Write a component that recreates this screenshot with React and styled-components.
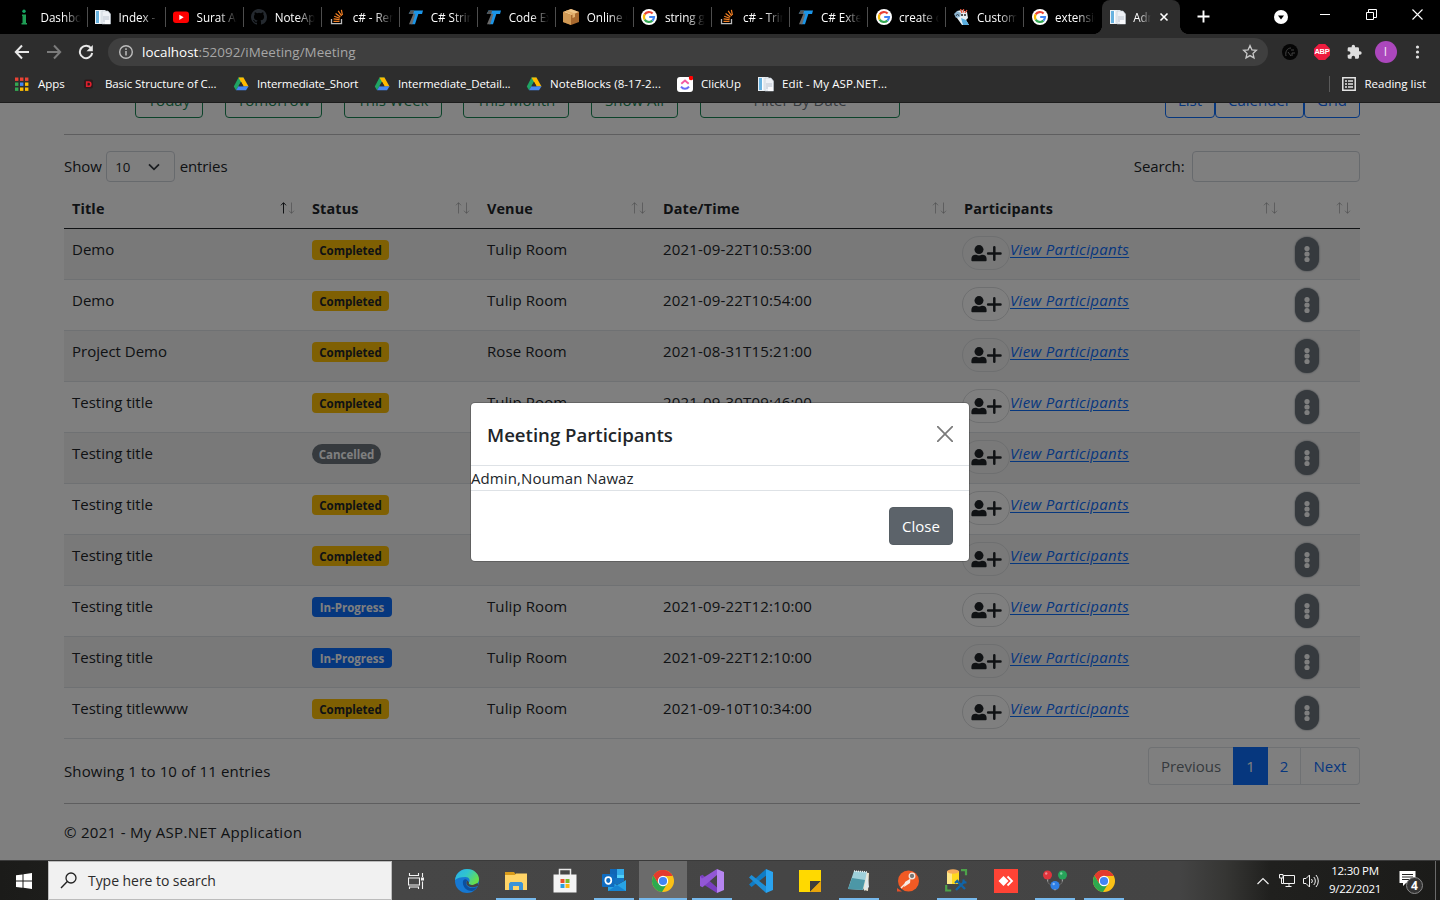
import React from "react";
import styled, { createGlobalStyle, css } from "styled-components";

const Global = createGlobalStyle`
  *, *::before, *::after { box-sizing: border-box; }
  body { margin: 0; background: #000; overflow: hidden; }
  svg { display: block; flex: none; }
  button, input { font: inherit; letter-spacing: inherit; }
`;

const Screen = styled.div`
  width: 1440px;
  height: 900px;
  display: flex;
  flex-direction: column;
  overflow: hidden;
  font-family: "Open Sans", "Noto Sans", sans-serif;
`;

/* ---------- Browser chrome ---------- */
const TabStrip = styled.header`
  height: 34px;
  flex: none;
  display: flex;
  padding-left: 9.5px;
  background: #000;
  color: #fff;
`;
const Tab = styled.div`
  width: 78.05px;
  flex: none;
  height: 34px;
  display: flex;
  align-items: center;
  padding-left: 7.5px;
  gap: 8px;
  position: relative;
  border-radius: 8px 8px 0 0;
  background: ${(p) => (p.$active ? "#2d2d2d" : "transparent")};
  ${(p) =>
    p.$divider &&
    css`
      &::after {
        content: "";
        position: absolute;
        right: 0;
        top: 7px;
        width: 1px;
        height: 20px;
        background: #4d4d4d;
      }
    `}
  ${(p) =>
    p.$active &&
    css`
      &::before, &::after {
        content: "";
        position: absolute;
        bottom: 0;
        width: 8px;
        height: 8px;
      }
      &::before { left: -8px; background: radial-gradient(circle at 0 0, transparent 7.6px, #2d2d2d 8px); }
      &::after { right: -8px; background: radial-gradient(circle at 100% 0, transparent 7.6px, #2d2d2d 8px); }
    `}
`;
const TabTitle = styled.span`
  width: ${(p) => (p.$active ? 18 : 40)}px;
  margin-left: -0.5px;
  overflow: hidden;
  white-space: nowrap;
  font-size: 11.7px;
  line-height: 18px;
  letter-spacing: -0.05px;
  mask-image: linear-gradient(to right, #000 ${(p) => (p.$active ? 30 : 55)}%, transparent 100%);
`;
const StripTools = styled.div`
  flex: 1;
  display: flex;
  align-items: flex-start;
  padding-left: 15px;
`;
const ToolGlyph = styled.div`
  margin: ${(p) => p.$m};
`;

const AddressRow = styled.div`
  height: 35px;
  flex: none;
  display: flex;
  align-items: center;
  background: #2d2d2d;
  padding: 1px 14px 0 14px;
`;
const NavGroup = styled.div`
  display: flex;
  gap: 16px;
  width: 94px;
`;
const Omnibox = styled.div`
  width: 1160px;
  height: 28px;
  border-radius: 14px;
  background: #3f3f3f;
  display: flex;
  align-items: center;
  padding: 0 10px;
  color: #a6a6a6;
  font-size: 13.4px;
  letter-spacing: 0.03px;
  white-space: nowrap;
  b { color: #fff; font-weight: 400; }
`;
const Url = styled.span`
  flex: 1;
  margin-left: 8px;
`;
const Extensions = styled.div`
  display: flex;
  align-items: center;
  margin-left: 14px;
`;
const Abp = styled.div`
  width: 16px;
  height: 16px;
  margin: 0 16px;
  background: #ee1c3f;
  clip-path: polygon(30% 0, 70% 0, 100% 30%, 100% 70%, 70% 100%, 30% 100%, 0 70%, 0 30%);
  display: grid;
  place-items: center;
  color: #fff;
  font: 700 7.5px/16px "Liberation Sans", sans-serif;
  letter-spacing: -0.2px;
`;
const Avatar = styled.div`
  width: 22px;
  height: 22px;
  border-radius: 50%;
  margin: 0 14px 0 12.5px;
  background: #ab47bc;
  color: #f3e3f6;
  display: grid;
  place-items: center;
  font-size: 12px;
  line-height: 22px;
`;
const BookmarkBar = styled.div`
  height: 34px;
  flex: none;
  display: flex;
  align-items: center;
  padding: 0 14px 4px;
  background: #2d2d2d;
  border-bottom: 1px solid #1d1d1d;
  color: #fff;
  font-size: 11.5px;
  white-space: nowrap;
`;
const Bookmark = styled.div`
  width: ${(p) => p.$w}px;
  display: flex;
  align-items: center;
  gap: 8px;
  letter-spacing: ${(p) => p.$ls || 0}px;
`;
const ReadingList = styled.div`
  margin-left: auto;
  display: flex;
  align-items: center;
  gap: 7.5px;
  height: 16px;
  padding-left: 10.5px;
  border-left: 1px solid #5a5a5a;
`;

/* ---------- Web page ---------- */
const Viewport = styled.div`
  height: 757px;
  flex: none;
  position: relative;
  overflow: hidden;
  background: #fff;
`;
const Page = styled.main`
  width: 1296px;
  margin: -23px 0 0 64px;
  color: #212529;
  font-size: 15px;
  line-height: 24px;
`;
const FilterRow = styled.div`
  display: flex;
  padding-left: 71px;
  height: 38px;
`;
const OutlineButton = styled.button`
  width: ${(p) => p.$w}px;
  height: 38px;
  margin-right: ${(p) => p.$mr || 0}px;
  padding: 1px 0 0;
  border: 1px solid ${(p) => p.$tone};
  border-radius: 4px;
  background: transparent;
  color: ${(p) => (p.$muted ? "#6c757d" : p.$tone)};
  white-space: nowrap;
`;
const ViewSwitch = styled.div`
  display: flex;
  margin-left: auto;
`;
const Rule = styled.hr`
  height: 1px;
  border: 0;
  margin: ${(p) => p.$top || 0}px 0 0;
  background: #bcbdbe;
`;
const ControlRow = styled.div`
  display: flex;
  align-items: center;
  justify-content: space-between;
  height: 31px;
  margin-top: 16px;
`;
const Inline = styled.label`
  display: flex;
  align-items: center;
  gap: ${(p) => p.$gap}px;
`;
const Caption = styled.span`
  position: relative;
  top: -1px;
  letter-spacing: ${(p) => p.$ls || 0}px;
`;
const SelectBox = styled.div`
  width: 69px;
  height: 31px;
  border: 1px solid #ced4da;
  border-radius: 4px;
  display: flex;
  align-items: center;
  justify-content: space-between;
  padding: 0 14px 0 8px;
  font-size: 13.3px;
`;
const SearchInput = styled.input`
  width: 168px;
  height: 31px;
  border: 1px solid #ced4da;
  border-radius: 4px;
  background: #fff;
`;
const Table = styled.div`
  margin-top: 6px;
`;
const gridColumns = css`
  display: grid;
  grid-template-columns: 240px 175px 176px 301px 331px 73px;
`;
const HeadRow = styled.div`
  ${gridColumns}
  height: 41px;
  border-bottom: 1px solid #212529;
  font-weight: 700;
  font-size: 14.4px;
  letter-spacing: 0.13px;
`;
const HeadCell = styled.div`
  display: flex;
  justify-content: space-between;
  padding: 9px 8px 0;
`;
const Row = styled.div`
  ${gridColumns}
  height: 51px;
  border-bottom: 1px solid #dee2e6;
  background: ${(p) => (p.$striped ? "#f2f2f2" : "#fff")};
`;
const Cell = styled.div`
  padding: 8px 8px 0;
  white-space: nowrap;
  letter-spacing: ${(p) => p.$ls || 0}px;
`;
const badgeTones = {
  Completed: ["#ffc107", "#212529", 4, 77],
  Cancelled: ["#6c757d", "#fff", 10, 69],
  "In-Progress": ["#0d6efd", "#fff", 4, 80],
};
const Badge = styled.div`
  width: ${(p) => badgeTones[p.$kind][3]}px;
  height: 20px;
  margin-top: 3px;
  text-align: center;
  border-radius: ${(p) => badgeTones[p.$kind][2]}px;
  background: ${(p) => badgeTones[p.$kind][0]};
  color: ${(p) => badgeTones[p.$kind][1]};
  font-weight: 700;
  font-size: 11.5px;
  line-height: 21px;
`;
const PeopleCell = styled.div`
  display: flex;
  align-items: flex-start;
  padding: 7px 0 0 6px;
`;
const AddButton = styled.button`
  width: 48px;
  height: 34px;
  padding: 0 0 0 8px;
  border: 1px solid #dcdee0;
  border-radius: 17px;
  background: transparent;
`;
const Link = styled.a`
  margin-top: 1px;
  color: #0d6efd;
  font-style: italic;
  text-decoration: underline;
  text-underline-offset: 2px;
  white-space: nowrap;
  letter-spacing: 0.33px;
`;
const Kebab = styled.button`
  width: 24px;
  height: 34px;
  margin: 8px 0 0 8px;
  border: 0;
  border-radius: 12px;
  background: #6c757d;
  box-shadow: 0 0 2px #6c757d;
  padding: 0;
  display: grid;
  place-items: center;
`;
const TableFooter = styled.div`
  display: flex;
  justify-content: space-between;
  height: 64px;
  padding-top: 8px;
`;
const Info = styled.div`
  padding-top: 12px;
  letter-spacing: 0.14px;
`;
const Pager = styled.nav`
  display: flex;
  height: 38px;
`;
const PageLink = styled.a`
  width: ${(p) => p.$w}px;
  display: grid;
  place-items: center;
  border: 1px solid ${(p) => (p.$active ? "#0d6efd" : "#dee2e6")};
  border-left-width: ${(p) => (p.$joined ? 0 : 1)}px;
  border-right-width: ${(p) => (p.$disabled ? 0 : 1)}px;
  border-radius: ${(p) => p.$radius || 0};
  color: ${(p) => (p.$active ? "#fff" : p.$disabled ? "#6c757d" : "#0d6efd")};
  background: ${(p) => (p.$active ? "#0d6efd" : "transparent")};
`;
const Copyright = styled.footer`
  padding-top: 16px;
  letter-spacing: 0.3px;
`;
const Backdrop = styled.div`
  position: absolute;
  inset: 0;
  background: rgba(0, 0, 0, 0.5);
`;
const Dialog = styled.section`
  position: absolute;
  left: 471px;
  top: 300px;
  width: 498px;
  height: 158px;
  border-radius: 4px;
  background: #fff;
  box-shadow: 0 0 0 1px rgba(0, 0, 0, 0.2);
  color: #212529;
  font-size: 15px;
  line-height: 24px;
`;
const DialogHeader = styled.div`
  display: flex;
  align-items: center;
  justify-content: space-between;
  height: 63px;
  padding: 0 16px 0 16px;
  border-bottom: 1px solid #dee2e6;
`;
const DialogTitle = styled.h5`
  margin: 2px 0 0;
  font-size: 18.6px;
  font-weight: 600;
  letter-spacing: 0;
`;
const DialogBody = styled.div`
  height: 24px;
  letter-spacing: 0.1px;
`;
const DialogFooter = styled.div`
  border-top: 1px solid #dee2e6;
  padding: 16px;
  display: flex;
  justify-content: flex-end;
`;
const CloseButton = styled.button`
  width: 64px;
  height: 38px;
  border: 1px solid #565e64;
  border-radius: 4px;
  background: #5c636a;
  color: #fff;
  padding: 0;
`;

/* ---------- Taskbar ---------- */
const Taskbar = styled.footer`
  height: 40px;
  flex: none;
  display: flex;
  background: linear-gradient(to right, #1b1b19 0, #1d1d1b 48px, #464646 392px, #444 1180px, #363634 1225px, #20201e 1270px, #1b1b19 1440px);
  border-top: 1px solid #3a3a3a;
`;
const Start = styled.div`
  width: 48px;
  display: grid;
  place-items: center;
`;
const TaskSearch = styled.div`
  width: 344px;
  height: 39px;
  background: #f1f1f1;
  border: 1px solid #bcbcbc;
  display: flex;
  align-items: center;
  gap: 11px;
  padding-left: 11px;
  color: #2b2b2b;
  font-size: 14px;
  letter-spacing: -0.05px;
`;
const AppSlot = styled.div`
  width: ${(p) => (p.$current ? 48 : p.$w || 49)}px;
  height: 39px;
  margin: ${(p) => (p.$current ? "0 0.5px" : 0)};
  padding-right: ${(p) => p.$pr || 0}px;
  display: grid;
  place-items: center;
  position: relative;
  background: ${(p) => (p.$current ? "#6b6b6b" : "transparent")};
  ${(p) =>
    p.$open &&
    css`
      &::after {
        content: "";
        position: absolute;
        bottom: 0;
        left: ${p.$current ? 0 : 4.5}px;
        right: ${p.$current ? 0 : 4.5}px;
        height: 2px;
        background: #76b9ed;
      }
    `}
`;
const Tray = styled.div`
  margin-left: auto;
  display: flex;
  align-items: center;
  width: 183px;
`;
const Clock = styled.div`
  width: 64px;
  margin: -2px 0 0 3px;
  text-align: center;
  color: #fff;
  font-size: 11.5px;
  line-height: 18px;
  letter-spacing: -0.25px;
`;
const Notifications = styled.div`
  position: relative;
  margin-left: 12px;
  width: 25px;
  height: 28px;
`;
const Count = styled.span`
  position: absolute;
  left: 7px;
  top: 10px;
  width: 17px;
  height: 17px;
  border: 1px solid #8a8a8a;
  border-radius: 50%;
  background: #333;
  color: #fff;
  font-size: 12px;
  font-weight: 700;
  line-height: 15px;
  text-align: center;
`;
const ShowDesktop = styled.div`
  width: 5px;
  height: 39px;
  margin-left: auto;
  border-left: 1px solid #6a6a6a;
`;

/* ---------- Icons ---------- */
const Svg = ({ s = 16, w, h, vb, children }) => (
  <svg width={w || s} height={h || s} viewBox={vb || `0 0 ${w || s} ${h || s}`} fill="none">
    {children}
  </svg>
);
const InfoLogo = () => (
  <Svg>
    <circle cx="7" cy="2.2" r="1.7" fill="#16a765" />
    <path d="M5 5.500h4V14h1v1.500H4.500V14h1V7H5z" fill="#1f9d55" />
  </Svg>
);
const DocLogo = () => (
  <Svg>
    <path d="M0 1h10l3 3v11H0z" fill="#e9eef3" />
    <path d="M1 2h3v12H1z" fill="#68b2df" />
    <path d="M4 2h1v12H4z" fill="#fff" />
    <path d="M7 2h6l2.500 3v10H7z" fill="#eef1f6" stroke="#c1c9d4" strokeWidth=".6" />
    <path d="M8 8h6M8 10h6M8 12h4" stroke="#bdc6d2" />
    <path d="M10 11h5v4h-5z" fill="#f9fafc" />
  </Svg>
);
const YoutubeLogo = () => (
  <Svg>
    <rect x="0" y="2.5" width="16" height="11.5" rx="3" fill="#f00" />
    <path d="M6.300 5.700l4.400 2.600-4.400 2.600z" fill="#fff" />
  </Svg>
);
const GithubLogo = () => (
  <Svg>
    <path
      fill="#24292f"
      d="M8 0C3.58 0 0 3.58 0 8c0 3.54 2.29 6.53 5.47 7.59.4.07.55-.17.55-.38 0-.19-.01-.82-.01-1.49-2.01.37-2.53-.49-2.69-.94-.09-.23-.48-.94-.82-1.13-.28-.15-.68-.52-.01-.53.63-.01 1.08.58 1.23.82.72 1.21 1.87.87 2.33.66.07-.52.28-.87.51-1.07-1.78-.2-3.64-.89-3.64-3.95 0-.87.31-1.59.82-2.15-.08-.2-.36-1.02.08-2.12 0 0 .67-.21 2.2.82a7.6 7.6 0 014 0c1.53-1.04 2.2-.82 2.2-.82.44 1.1.16 1.92.08 2.12.51.56.82 1.27.82 2.15 0 3.07-1.87 3.75-3.65 3.95.29.25.54.73.54 1.48 0 1.07-.01 1.93-.01 2.2 0 .21.15.46.55.38A8.01 8.01 0 0016 8c0-4.42-3.58-8-8-8z"
    />
  </Svg>
);
const StackLogo = () => (
  <Svg>
    <path d="M2.500 10v4.700h10V10" stroke="#bcbbbb" strokeWidth="1.3" />
    <path d="M4.500 12.300h6M4.600 9.800l6 .8M5.200 7.200l5.600 2M6.600 4.400l4.800 3.600M9.200 1.800l3.400 5M12.400.8l1 5.400" stroke="#f48024" strokeWidth="1.2" />
  </Svg>
);
const TLogo = () => (
  <Svg>
    <path d="M3.500 1.500H16l-1 3.400H1.700z" fill="#1b95e8" />
    <path d="M3.500 1.500h3.700l-1 3.400H1.700z" fill="#555" />
    <path d="M7.600 4.700h3.800L8 15.200H4.300z" fill="#1b95e8" />
    <path d="M6.400 4.700h2L5.300 15.200H2z" fill="#6b6b6b" />
  </Svg>
);
const BoxLogo = () => (
  <Svg>
    <path d="M0 3l8-3 8 3v10l-8 3-8-3z" fill="#a8692e" />
    <path d="M0 3l8-3 8 3-8 3z" fill="#eec68a" />
    <path d="M0 3l8 3v10l-8-3z" fill="#d29a55" />
    <path d="M4 1.500l8 3v3.500l-2.500 1V5.500L2 2.400z" fill="#e3b06c" />
  </Svg>
);
const GoogleLogo = () => (
  <Svg>
    <circle cx="8" cy="8" r="8" fill="#fff" />
    <g strokeWidth="2.2">
      <path d="M11.600 4.600A5 5 0 003.700 5.400" stroke="#ea4335" />
      <path d="M3.700 5.400a5 5 0 000 5.200" stroke="#fbbc05" />
      <path d="M3.700 10.600a5 5 0 007.700 1" stroke="#34a853" />
      <path d="M11.400 11.600A5 5 0 0013 8H8.200" stroke="#4285f4" />
    </g>
  </Svg>
);
const CustomLogo = () => (
  <Svg>
    <path d="M3 2l5-1 5 2 1 6-2 2 3 5H8L3 9z" fill="#e6f0f6" />
    <path d="M6.500 0l1.500 4M9.500 0v3.500M13 1l-2 3" stroke="#e2553d" strokeWidth="1.300" />
    <path d="M0 5l3-3 4 2-1 4-4 1z" fill="#8db4cf" />
    <circle cx="8" cy="6" r="1" fill="#222" />
    <circle cx="11" cy="6" r="1" fill="#222" />
    <path d="M7 9l5 2 3 5H9z" fill="#5aaee0" />
    <path d="M2 7l1.500-2L5 7" stroke="#345" />
  </Svg>
);
const DriveLogo = () => (
  <Svg>
    <path d="M5.500 1.500h5L8 6l-5 8.300L.8 10.500z" fill="#1fa463" />
    <path d="M5.500 1.500h5l5 9h-5z" fill="#ffba00" />
    <path d="M3 14.300l2.400-4h10.100L13 14.300z" fill="#4688f4" />
    <path d="M8 5.800l2.600 4.500H5.400z" fill="#2d2d2d" />
  </Svg>
);
const AppsLogo = () => (
  <Svg>
    {["#ea4335", "#ea4335", "#ea4335", "#34a853", "#4285f4", "#fbbc05", "#34a853", "#fbbc05", "#fbbc05"].map((c, i) => (
      <rect key={i} x={1 + (i % 3) * 5} y={1.5 + Math.floor(i / 3) * 5} width="3.4" height="3.4" fill={c} />
    ))}
  </Svg>
);
const DLogo = () => (
  <Svg>
    <rect x="3" y="3.5" width="9" height="9" rx="2" fill="#2b1a1c" />
    <path d="M5.700 6h2a2 2 0 010 4.300h-2z" stroke="#e21f2d" strokeWidth="1.600" />
  </Svg>
);
const ClickUpLogo = () => (
  <Svg>
    <rect y="1" width="16" height="15" rx="3" fill="#fff" />
    <path d="M4.300 7.800L8 4.600l3.700 3.200" stroke="#f35ba2" strokeWidth="1.900" />
    <path d="M4 10.600c2 2.800 6 2.800 8 0" stroke="#6a6cf6" strokeWidth="1.900" />
    <circle cx="14" cy="2" r="2.2" fill="#f00" />
  </Svg>
);
const SortArrows = ({ up }) => (
  <Svg w={17} h={18}>
    <g stroke="#212529">
      <path d="M4.500 16.500V6M2 8.300l2.500-2.700L7 8.300" opacity={up ? 1 : 0.3} />
      <path d="M12.500 5.500V16M10 13.700l2.500 2.700 2.500-2.700" opacity="0.3" />
    </g>
  </Svg>
);
const PersonPlus = () => (
  <Svg w={31} h={18}>
    <circle cx="8" cy="5.6" r="4.5" fill="#212529" />
    <path d="M.4 16.400v-1.700A4.200 4.200 0 014.600 10.700h.6a6 6 0 005.600 0h.6a4.200 4.200 0 014.200 4v1.700a.9.9 0 01-.9.8H1.300a.9.9 0 01-.9-.8z" fill="#212529" />
    <path d="M23.300 3.300v12.400M17.100 9.500h12.400" stroke="#212529" strokeWidth="2.5" strokeLinecap="round" />
  </Svg>
);
const Dots = ({ c = "#fff", w = 6, h = 18, r = 2.6, step = 5.5 }) => (
  <Svg w={w} h={h}>
    {[-1, 0, 1].map((k) => (
      <circle key={k} cx={w / 2} cy={h / 2 + k * step} r={r} fill={c} />
    ))}
  </Svg>
);
const Chrome = () => (
  <Svg s={22}>
    <circle cx="11" cy="11" r="11" fill="#fbc116" />
    <path d="M11 11L1.500 5.500A11 11 0 0120.500 5.500H11z" fill="#e33b2e" />
    <path d="M1.500 5.500A11 11 0 0010 22l5.300-8.500L11 11 6 13z" fill="#2da94f" />
    <path d="M1.500 5.500L6.300 13.500 11 6h9.500A11 11 0 001.500 5.500z" fill="#e33b2e" />
    <circle cx="11" cy="11" r="5.2" fill="#fff" />
    <circle cx="11" cy="11" r="4.1" fill="#4285f4" />
  </Svg>
);
const Edge = () => (
  <Svg s={24}>
    <defs>
      <linearGradient id="edgeTop" x1="0" y1="0" x2="1" y2=".5">
        <stop offset="0" stopColor="#2ab0e8" />
        <stop offset=".5" stopColor="#30c4cf" />
        <stop offset="1" stopColor="#66e04c" />
      </linearGradient>
    </defs>
    <circle cx="12" cy="12" r="12" fill="#1678d2" />
    <path d="M0 11C1 4 6 0 12 0c7 0 12 5 12 10 0 4-3 6-6 6-3 0-5-1-4-2.500 1.500-2 .5-5.500-3.500-5.500C5.500 8 2 9 0 11z" fill="url(#edgeTop)" />
    <path d="M8 12c-1 5 3 10 9 10 2-.5 4-2 5-4-6 2.500-11 0-11-4 0-1 .5-2 1.500-2.500C11 9.500 9 10 8 12z" fill="#0b4f9e" />
    <path d="M12.500 11.500c-2 1.500-1.500 5.500 3 6.500 3 .6 5.500 0 8-1.500L22.500 14l-4 1.800c-3 .6-5.500-.3-4.500-2.300z" fill="#444" />
  </Svg>
);
const Explorer = () => (
  <Svg w={22} h={18}>
    <path d="M0 0h9l1.500 2H22v16H0z" fill="#d99b1a" />
    <path d="M0 3h10l1-1.500h11V18H0z" fill="#ffd467" />
    <path d="M4 18v-6.500l1.500-1.500h11l1.500 1.500V18h-4v-4H8v4z" fill="#3b93d8" />
  </Svg>
);
const Store = () => (
  <Svg w={24} h={25}>
    <path d="M6.500 7V1.500h11V7" stroke="#e8e8e8" strokeWidth="1.5" />
    <path d="M.5 6.500h23v18H.5z" fill="#f3f3f3" />
    <path d="M7.500 11h4v4h-4z" fill="#e8502b" />
    <path d="M12.500 11h4v4h-4z" fill="#7db928" />
    <path d="M7.500 16h4v4h-4z" fill="#2a9fe0" />
    <path d="M12.500 16h4v4h-4z" fill="#fdb813" />
  </Svg>
);
const Outlook = () => (
  <Svg w={24} h={23}>
    <path d="M8 0h14v12H8z" fill="#1066b5" />
    <path d="M15 0h7v6h-7z" fill="#32a9e8" />
    <path d="M15 6h7v6h-7z" fill="#50d0f8" />
    <path d="M6 11l9 5 9-5v11H6z" fill="#28a3e4" />
    <path d="M6 22l9-6 9 6z" fill="#1684d2" />
    <path d="M8 9h14v3l-7 4-7-4z" fill="#1272c0" />
    <rect y="5" width="12.5" height="13" rx="1" fill="#0f6cc0" />
    <ellipse cx="6.3" cy="11.5" rx="3" ry="3.3" stroke="#fff" strokeWidth="1.7" />
  </Svg>
);
const VisualStudio = () => (
  <Svg s={24}>
    <path fillRule="evenodd" d="M0 7l2.500-1.200L17 18.500V24L2 14.500 0 17z" fill="#7a3fc0" />
    <path d="M0 17l2.500 1.200L17 6V0L2 9.500 0 7z" fill="#9257d6" />
    <path d="M17 0l7 3v18l-7 3z" fill="#b685f0" />
  </Svg>
);
const VsCode = () => (
  <Svg s={24}>
    <path d="M17 0L0 15.500 2.500 18 18 6z" fill="#0f7bc4" />
    <path d="M17 24L0 8.500 2.500 6 18 18z" fill="#1d8fd8" />
    <path d="M17 0l7 3v18l-7 3z" fill="#2aa3ef" />
  </Svg>
);
const Sticky = () => (
  <Svg s={22}>
    <path d="M0 0h22v22H0z" fill="#ffd900" />
    <path d="M11 11h11L11 22z" fill="#3c3c3c" />
    <path d="M22 11v11H11z" fill="#e9a50b" />
  </Svg>
);
const Notepad = () => (
  <Svg w={24} h={24}>
    <path d="M7 2l15 2-1 18-4-1z" fill="#ece2cb" />
    <path d="M7 2l13 1-4 18-15-1z" fill="#9fd0da" />
    <path d="M5 9l13 2-2.500 10L1 20z" fill="#4c97a6" />
    <path d="M7 2l13 1" stroke="#e9eef0" strokeWidth="1.5" strokeDasharray="1 1" />
    <path d="M20 4l2 14-5 4z" fill="#dfe9ec" />
  </Svg>
);
const Postman = () => (
  <Svg s={22}>
    <circle cx="11.5" cy="11" r="10.5" fill="#f15a24" />
    <path d="M0 18l5 3.500H0z" fill="#e5502a" />
    <circle cx="15" cy="6" r="2.8" stroke="#f4e8df" strokeWidth="1.3" fill="#777" />
    <path d="M13.500 8.500L8 12l-1 5 6-4z" fill="#f7ebe3" />
    <path d="M4 18l6-6" stroke="#f7ebe3" strokeWidth="1.5" />
  </Svg>
);
const Ssms = () => (
  <Svg w={23} h={23}>
    <path d="M16 1.200h5v5M1.200 16v5.500h5" stroke="#4da34a" strokeWidth="2.2" />
    <path d="M2 2h12v13H2z" fill="#ffd91f" />
    <path d="M2 2h5v13H2z" fill="#ffe889" />
    <ellipse cx="8" cy="2.5" rx="6" ry="2.2" fill="#f5ab5b" />
    <path d="M12 12l8 8M20 12l-9 9" stroke="#1064a8" strokeWidth="2.4" />
    <path d="M10 14l3-3M18.500 10.500v3h3" stroke="#1064a8" strokeWidth="2" />
  </Svg>
);
const AnyDesk = () => (
  <Svg s={24}>
    <path d="M0 0h24v24H0z" fill="#ff4335" />
    <path d="M9.500 7l5 5-5 5-5-5z" fill="#fff" />
    <path d="M13.500 7.500l4.500 4.500-4.500 4.500" stroke="#fff" strokeWidth="1.8" />
  </Svg>
);
const Balloons = () => (
  <Svg w={24} h={24}>
    <path d="M5 9v5l6 4M19 9v5l-6 4" stroke="#666" />
    <circle cx="4.500" cy="6" r="4.5" fill="#e0343c" />
    <circle cx="19.500" cy="6" r="4.5" fill="#27a35a" />
    <circle cx="12" cy="16.500" r="4.5" fill="#2f7fe6" />
    <path d="M4 10.500h1v2H4zM19 10.500h1v2h-1zM11 20h2l-1 2z" fill="#999" />
    <circle cx="3.200" cy="4.500" r="1.2" fill="#ee8a90" />
    <circle cx="18.200" cy="4.500" r="1.2" fill="#7ed0a0" />
    <circle cx="10.700" cy="15" r="1.2" fill="#86b8f4" />
  </Svg>
);
const TaskView = () => (
  <Svg w={17} h={16}>
    <path d="M.5 5h11v7H.5zM1.500 0v2.500h9V0M1.500 16v-2h9v2M14.500 0v4M14.500 8.500V16" stroke="#f2f2f2" strokeWidth="1.1" />
    <path d="M13 4.500h3v3h-3z" fill="#f2f2f2" />
  </Svg>
);

/* ---------- Data ---------- */
const tabs = [
  [InfoLogo, "Dashboard"], [DocLogo, "Index - My"], [YoutubeLogo, "Surat Al"], [GithubLogo, "NoteApp"],
  [StackLogo, "c# - Rem"], [TLogo, "C# String"], [TLogo, "Code Ex"], [BoxLogo, "Online C"],
  [GoogleLogo, "string g"], [StackLogo, "c# - Trim"], [TLogo, "C# Exten"], [GoogleLogo, "create c"],
  [CustomLogo, "Custom"], [GoogleLogo, "extensio"],
];
const bookmarks = [
  [AppsLogo, "Apps", 67, 0], [DLogo, "Basic Structure of C...", 152, -0.1], [DriveLogo, "Intermediate_Short", 141, -0.13],
  [DriveLogo, "Intermediate_Detail...", 152, -0.1], [DriveLogo, "NoteBlocks (8-17-2...", 151, 0.07],
  [ClickUpLogo, "ClickUp", 81, 0], [DocLogo, "Edit - My ASP.NET...", 140, 0.1],
];
const filters = [["Today", 68, 22], ["Tomorrow", 97, 22], ["This Week", 98, 21], ["This Month", 106, 22], ["Show All", 87, 22]];
const columns = ["Title", "Status", "Venue", "Date/Time", "Participants", ""];
const meetings = [
  ["Demo", "Completed", "Tulip Room", "2021-09-22T10:53:00"],
  ["Demo", "Completed", "Tulip Room", "2021-09-22T10:54:00"],
  ["Project Demo", "Completed", "Rose Room", "2021-08-31T15:21:00"],
  ["Testing title", "Completed", "Tulip Room", "2021-09-30T09:46:00"],
  ["Testing title", "Cancelled", "", ""],
  ["Testing title", "Completed", "", ""],
  ["Testing title", "Completed", "", ""],
  ["Testing title", "In-Progress", "Tulip Room", "2021-09-22T12:10:00"],
  ["Testing title", "In-Progress", "Tulip Room", "2021-09-22T12:10:00"],
  ["Testing titlewww", "Completed", "Tulip Room", "2021-09-10T10:34:00"],
];
const apps = [
  [Edge, 0], [Explorer, 1], [Store, 0], [Outlook, 1], [Chrome, 2], [VisualStudio, 1], [VsCode, 0], [Sticky, 0],
  [Notepad, 1], [Postman, 0], [Ssms, 1], [AnyDesk, 0], [Balloons, 1], [Chrome, 1],
];

function Browser() {
  return (
    <>
      <TabStrip>
        {tabs.map(([Icon, title], i) => (
          <Tab key={i} $divider={i < tabs.length - 1}>
            <Icon />
            <TabTitle>{title}</TabTitle>
          </Tab>
        ))}
        <Tab $active>
          <DocLogo />
          <TabTitle $active>Adm</TabTitle>
          <Svg s={10}><path d="M1.500 1.500l7 7M8.500 1.500l-7 7" stroke="#fff" strokeWidth="1.6" /></Svg>
        </Tab>
        <StripTools>
          <ToolGlyph $m="10px 0 0 2px"><Svg s={13}><path d="M6.500 .5v12M.5 6.500h12" stroke="#fff" strokeWidth="1.9" /></Svg></ToolGlyph>
          <ToolGlyph $m="10px 0 0 64px">
            <Svg s={14}><circle cx="7" cy="7" r="7" fill="#fff" /><path d="M4 5.500h6L7 9.500z" fill="#000" /></Svg>
          </ToolGlyph>
          <ToolGlyph $m="9px 0 0 32px"><Svg s={11}><path d="M0 5.500h10" stroke="#fff" /></Svg></ToolGlyph>
          <ToolGlyph $m="9px 0 0 35px"><Svg s={11}><path d="M.5 3.500h7v7h-7zM2.500 3.500v-3h8v8h-3" stroke="#fff" /></Svg></ToolGlyph>
          <ToolGlyph $m="9px 0 0 35px"><Svg s={11}><path d="M.5 .5l10 10M10.500 .5l-10 10" stroke="#fff" strokeWidth="1.1" /></Svg></ToolGlyph>
        </StripTools>
      </TabStrip>
      <AddressRow>
        <NavGroup>
          <Svg><path d="M15 8H2M8 1.500L1.800 8 8 14.500" stroke="#e8e8e8" strokeWidth="2" /></Svg>
          <Svg><path d="M1 8h13M8 1.500L14.200 8 8 14.500" stroke="#7b7b7b" strokeWidth="2" /></Svg>
          <Svg><path d="M13.200 4.500A6.200 6.200 0 1014.200 9" stroke="#e8e8e8" strokeWidth="2" /><path d="M14.800 1v6.300H8.500z" fill="#e8e8e8" /></Svg>
        </NavGroup>
        <Omnibox>
          <Svg><circle cx="8" cy="8" r="6.3" stroke="#bdbdbd" strokeWidth="1.4" /><path d="M8 7v4.500M8 4.300v1.600" stroke="#bdbdbd" strokeWidth="1.5" /></Svg>
          <Url><b>localhost</b>:52092/iMeeting/Meeting</Url>
          <Svg><path d="M8 1.600l1.900 4.200 4.500.5-3.400 3.100 1 4.500-4-2.300-4 2.300 1-4.500L1.600 6.300l4.500-.5z" stroke="#c8c8c8" strokeWidth="1.3" /></Svg>
        </Omnibox>
        <Extensions>
          <Svg>
            <circle cx="8" cy="8" r="8" fill="#050505" />
            <path d="M4 12c-1-4 1-8 5-8M10 12V9h3M9 6h3M6 8l3 4" stroke="#4a4a4a" strokeWidth=".9" />
          </Svg>
          <Abp>ABP</Abp>
          <Svg vb="0 0 24 24">
            <path fill="#dedede" d="M21 11h-1.500V7a2 2 0 00-2-2h-4V3.500a2.500 2.500 0 00-5 0V5h-4a2 2 0 00-2 2v3.800H4a2.700 2.700 0 010 5.400H2.500V20a2 2 0 002 2h3.800v-1.500a2.700 2.700 0 015.400 0V22h3.800a2 2 0 002-2v-4H21a2.500 2.500 0 000-5z" />
          </Svg>
          <Avatar>I</Avatar>
          <Dots c="#e0e0e0" w={13} h={16} r={1.6} step={5} />
        </Extensions>
      </AddressRow>
      <BookmarkBar>
        {bookmarks.map(([Icon, label, w, ls]) => (
          <Bookmark key={label} $w={w} $ls={ls}>
            <Icon />
            {label}
          </Bookmark>
        ))}
        <ReadingList>
          <Svg><path d="M1.800 1.800h12.400v12.400H1.800z" stroke="#e4e4e4" strokeWidth="1.5" /><path d="M4 5h2M7 5h5M4 8h2M7 8h5M4 11h2M7 11h5" stroke="#e4e4e4" strokeWidth="1.6" /></Svg>
          Reading list
        </ReadingList>
      </BookmarkBar>
    </>
  );
}

function MeetingPage() {
  return (
    <Page>
      <FilterRow>
        {filters.map(([label, w, mr]) => (
          <OutlineButton key={label} $w={w} $mr={mr} $tone="#198754">{label}</OutlineButton>
        ))}
        <OutlineButton $w={200} $tone="#198754" $muted>Filter By Date</OutlineButton>
        <ViewSwitch>
          <OutlineButton $w={50} $tone="#0d6efd">List</OutlineButton>
          <OutlineButton $w={89} $tone="#0d6efd">Calender</OutlineButton>
          <OutlineButton $w={56} $tone="#0d6efd">Grid</OutlineButton>
        </ViewSwitch>
      </FilterRow>
      <Rule $top={16} />
      <ControlRow>
        <Inline $gap={4.5}>
          <Caption $ls={-0.1}>Show</Caption>
          <SelectBox>
            10
            <Svg w={12} h={8}><path d="M1 1.300l5 5 5-5" stroke="#343a40" strokeWidth="1.8" /></Svg>
          </SelectBox>
          <Caption $ls={-0.1}>entries</Caption>
        </Inline>
        <Inline $gap={7.5}>
          <Caption $ls={-0.1}>Search:</Caption>
          <SearchInput />
        </Inline>
      </ControlRow>
      <Table>
        <HeadRow>
          {columns.map((name, i) => (
            <HeadCell key={i}>
              <span>{name}</span>
              <SortArrows up={i === 0} />
            </HeadCell>
          ))}
        </HeadRow>
        {meetings.map(([title, status, venue, date], i) => (
          <Row key={i} $striped={i % 2 === 0}>
            <Cell>{title}</Cell>
            <Cell><Badge $kind={status}>{status}</Badge></Cell>
            <Cell $ls={0.1}>{venue}</Cell>
            <Cell $ls={0.17}>{date}</Cell>
            <PeopleCell>
              <AddButton><PersonPlus /></AddButton>
              <Link>View Participants</Link>
            </PeopleCell>
            <div><Kebab><Dots /></Kebab></div>
          </Row>
        ))}
      </Table>
      <TableFooter>
        <Info>Showing 1 to 10 of 11 entries</Info>
        <Pager>
          <PageLink $w={85} $disabled $radius="4px 0 0 4px">Previous</PageLink>
          <PageLink $w={35} $active>1</PageLink>
          <PageLink $w={33} $joined>2</PageLink>
          <PageLink $w={59} $joined $radius="0 4px 4px 0">Next</PageLink>
        </Pager>
      </TableFooter>
      <Rule />
      <Copyright>© 2021 - My ASP.NET Application</Copyright>
    </Page>
  );
}

function ParticipantsDialog() {
  return (
    <Dialog>
      <DialogHeader>
        <DialogTitle>Meeting Participants</DialogTitle>
        <Svg><path d="M.7 .7l14.600 14.600M15.300 .7L.7 15.300" stroke="#7a7a7a" strokeWidth="1.7" strokeLinecap="round" /></Svg>
      </DialogHeader>
      <DialogBody>Admin,Nouman Nawaz</DialogBody>
      <DialogFooter><CloseButton>Close</CloseButton></DialogFooter>
    </Dialog>
  );
}

function WindowsTaskbar() {
  return (
    <Taskbar>
      <Start><Svg><path d="M0 2.300L6.500 1.400v6.200H0zM7.500 1.200L16 0v7.600H7.500zM0 8.600h6.500v6.200L0 13.900zM7.500 8.600H16V16l-8.500-1.200z" fill="#fff" /></Svg></Start>
      <TaskSearch>
        <Svg s={17}><circle cx="11" cy="6" r="5" stroke="#222" strokeWidth="1.3" /><path d="M7.300 9.500L1 16" stroke="#222" strokeWidth="1.4" /></Svg>
        Type here to search
      </TaskSearch>
      <AppSlot $w={50} $pr={2}><TaskView /></AppSlot>
      {apps.map(([Icon, state], i) => (
        <AppSlot key={i} $open={state > 0} $current={state === 2}><Icon /></AppSlot>
      ))}
      <Tray>
        <Svg w={12} h={8}><path d="M.5 7L6 1.500 11.500 7" stroke="#eee" strokeWidth="1.2" /></Svg>
        <ToolGlyph $m="0 0 0 10px">
          <Svg w={16} h={14}><path d="M4.500 1.500h11v8h-11zM10 9.500v3M6.500 12.500h6M.5 .5h3.500v3.500H.5zM2.500 4v5.500h2" stroke="#f3f3f3" /></Svg>
        </ToolGlyph>
        <ToolGlyph $m="0 0 0 8px">
          <Svg w={17} h={14}><path d="M.5 4.500h2.500L6.500 1v12L3 9.500H.5zM8.500 5a3 3 0 010 4M10.800 3a6 6 0 010 8M13 1a9 9 0 010 12" stroke="#f3f3f3" /></Svg>
        </ToolGlyph>
        <Clock>12:30 PM<br />9/22/2021</Clock>
        <Notifications>
          <Svg w={17} h={20}><path d="M.5 4h16v12H7l-3 3v-3H.5z" fill="#fff" /><path d="M3 7.500h11M3 10h11M3 12.500h7" stroke="#222" /></Svg>
          <Count>4</Count>
        </Notifications>
        <ShowDesktop />
      </Tray>
    </Taskbar>
  );
}

export default function App() {
  return (
    <Screen>
      <Global />
      <Browser />
      <Viewport>
        <MeetingPage />
        <Backdrop />
        <ParticipantsDialog />
      </Viewport>
      <WindowsTaskbar />
    </Screen>
  );
}
